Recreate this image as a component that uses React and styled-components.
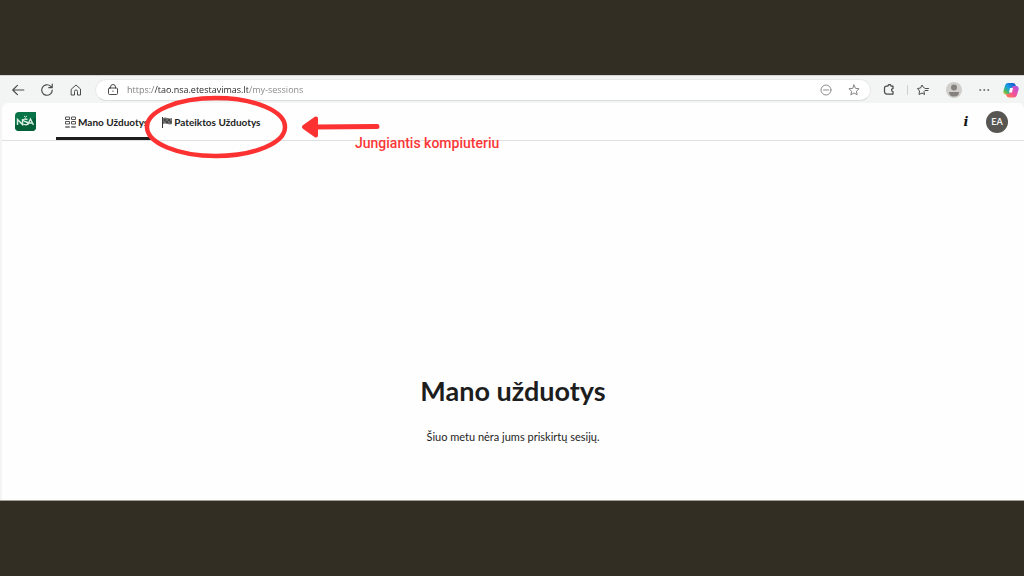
import React from "react";
import styled, { createGlobalStyle } from "styled-components";

const GlobalStyle = createGlobalStyle`
	* {
		box-sizing: border-box;
	}
	body {
		margin: 0;
		font-family: Lato, "Noto Sans", sans-serif;
		color: #1d1d1d;
		background: #322e24;
	}
`;

const Slide = styled.div`
	display: flex;
	flex-direction: column;
	min-height: 100vh;
	padding: 75px 0;
`;

const Browser = styled.div`
	flex: 1;
	display: flex;
	flex-direction: column;
	background: #f3f5f5;
	border-top: 1px solid #d5d6d4;
	border-bottom: 1px solid #a19e99;
`;

const Toolbar = styled.div`
	display: flex;
	align-items: center;
	height: 27px;
	padding-left: 8px;
`;

const IconButton = styled.button`
	display: flex;
	flex: none;
	align-items: center;
	justify-content: center;
	width: ${(p) => p.$width || 30}px;
	height: 22px;
	padding: 0;
	border: 0;
	background: none;
	color: ${(p) => p.$color || "#4b4b4b"};
	cursor: pointer;
`;

const NavButtons = styled.div`
	display: flex;
	width: 87px;
`;

const AddressBar = styled.div`
	display: flex;
	flex: 1;
	align-items: center;
	height: 22px;
	padding: 0 2px 0 8px;
	border: 1px solid #e9eaea;
	border-bottom-color: #dcdddd;
	border-radius: 11px;
	background: #fff;
`;

/* the host part of the address is darker than the rest */
const AddressInput = styled.input`
	flex: 1;
	min-width: 0;
	margin-left: 5px;
	padding: 0;
	border: 0;
	outline: 0;
	font: 9px "Open Sans", sans-serif;
	color: transparent;
	background: linear-gradient(90deg, #777 28px, #222 28px, #222 121px, #858585 121px);
	background-clip: text;
`;

const Separator = styled.div`
	width: 1px;
	height: 10px;
	background: #cfd0d0;
`;

const Site = styled.div`
	position: relative;
	flex: 1;
	display: flex;
	flex-direction: column;
	margin-left: 2px;
	border-radius: 6px 6px 0 0;
	background: #fefefe;
`;

const Header = styled.header`
	display: flex;
	align-items: stretch;
	height: 38px;
	padding: 0 16px 0 13px;
	border-bottom: 1px solid #e0e0e0;
`;

const Logo = styled.a`
	display: flex;
	align-items: center;
	width: 41px;
`;

const Tabs = styled.nav`
	display: flex;
	flex: 1;
`;

const Tab = styled.a`
	display: flex;
	align-items: center;
	gap: 2px;
	padding: 3px 4px 0 9px;
	border-bottom: 3px solid ${(p) => (p.$active ? "#1d1d1d" : "transparent")};
	color: #222;
	font-size: 10px;
	font-weight: 700;
	text-decoration: none;
	white-space: nowrap;
`;

const UserArea = styled.div`
	display: flex;
	align-items: center;
	gap: 9px;
`;

const InfoButton = styled(IconButton)`
	color: #111;
	font: italic 700 13px "DejaVu Serif", serif;
`;

const UserButton = styled.button`
	width: 22px;
	height: 22px;
	padding: 0;
	border: 0;
	border-radius: 50%;
	background: #575652;
	color: #f2f2f2;
	font: 700 9px Lato, sans-serif;
	cursor: pointer;
`;

const Main = styled.main`
	padding: 232px 16px 0;
	text-align: center;
`;

const Title = styled.h1`
	margin: 0;
	font-size: 27px;
	font-weight: 700;
	line-height: 36px;
`;

const Message = styled.p`
	margin: 19px 0 0;
	font-size: 11px;
	line-height: 18px;
`;

/* hand drawn marks that lie over the site */
const Marks = styled.svg`
	position: absolute;
	top: -9px;
	left: 139px;
	pointer-events: none;
`;

const MarkLabel = styled.div`
	position: absolute;
	top: 31px;
	left: 353px;
	color: #fb3737;
	font: 500 14px/18px Roboto, sans-serif;
	white-space: nowrap;
`;

function Icon({ size = 12, children, ...rest }) {
	return (
		<svg
			width={size}
			height={size}
			viewBox="0 0 24 24"
			fill="none"
			stroke="currentColor"
			strokeWidth="2"
			strokeLinecap="round"
			strokeLinejoin="round"
			aria-hidden="true"
			{...rest}
		>
			{children}
		</svg>
	);
}

const STAR = "M12 2l3 6.7 7.2.8-5.400 4.900 1.500 7.200-6.300-3.700-6.300 3.700 1.500-7.200L1.800 9.500 9 8.700z";

function NsaLogo() {
	return (
		<svg width="21" height="19" viewBox="0 0 21 19" aria-hidden="true">
			<path d="M4 0h17v15a4 4 0 0 1-4 4H4a4 4 0 0 1-4-4V4a4 4 0 0 1 4-4z" fill="#087447" />
			<path d="M0 13q11-1 21-8v10a4 4 0 0 1-4 4H4a4 4 0 0 1-4-4z" fill="#046039" />
			<g fill="none" stroke="#d8eee2" strokeWidth="1.400">
				<path d="M2.500 13V7.500l5 5V7" />
				<path d="M12.500 7.500q-4-1.200-4 .8c0 2 4.500 1 4.500 3 0 2-3.500 1.500-5 .7" />
				<path d="M12.500 13l3-6 3 6M13.500 11h4" />
				<path d="M9 4l1.500 1.200L12 4" strokeWidth="1" />
			</g>
		</svg>
	);
}

function GridIcon() {
	return (
		<svg width="11" height="12" viewBox="0 0 11 12" fill="none" stroke="#555" aria-hidden="true">
			<path d="M.5 1h4v2.500h-4zM6.500 1h4v2.500h-4zM.5 5.500h4V8h-4zM6.500 5.500h4V8h-4z" />
			<path d="M.5 10.500h4v1h-4zM6.500 10.500h4v1h-4z" stroke="#888" />
		</svg>
	);
}

function FlagIcon() {
	return (
		<svg width="11" height="12" viewBox="0 0 11 12" aria-hidden="true">
			<path d="M1.500 1v11" stroke="#333" />
			<path d="M2 2q2-.8 4.500 0T11 2v6q-2 .8-4.500 0T2 8z" fill="#707070" />
			<path d="M3 3h2v2H3zM7 3h2v2H7zM5 5h2v2H5zM9 5h1.500v2H9z" fill="#454545" />
		</svg>
	);
}

function CopilotIcon() {
	return (
		<svg width="16" height="16" viewBox="0 0 16 16" aria-hidden="true">
			<defs>
				<linearGradient id="cool" x1="1" y1="0" x2="0" y2="1">
					<stop offset="0" stopColor="#1748c8" />
					<stop offset=".5" stopColor="#189fe6" />
					<stop offset=".75" stopColor="#48b768" />
					<stop offset="1" stopColor="#f0c51e" />
				</linearGradient>
				<linearGradient id="warm" x1="1" y1="0" x2="0" y2="1">
					<stop offset="0" stopColor="#a557ee" />
					<stop offset=".5" stopColor="#f050a0" />
					<stop offset="1" stopColor="#ff813e" />
				</linearGradient>
			</defs>
			<path d="M5 1h5q2 0 2.600 2l.4 1.500h-2q-1.500 0-2 1.500l-1.500 4.500q-.7 2-2.500 2H2.500Q-.3 12 .4 9l1.800-6Q3 1 5 1z" fill="url(#cool)" />
			<path d="M11 15.500H6q-2 0-2.600-2L3 12h2q1.500 0 2-1.500L8.500 6q.7-2 2.500-2h2.500q2.800.5 2.100 3.500l-1.800 6q-.8 2-2.800 2z" fill="url(#warm)" />
			<path d="M7 6h3L9 10.500H6z" fill="#fff" />
		</svg>
	);
}

function BrowserToolbar() {
	return (
		<Toolbar>
			<NavButtons>
				<IconButton $width={20} aria-label="Back">
					<Icon size={14}>
						<path d="M22 12H3M11 4l-8 8 8 8" />
					</Icon>
				</IconButton>
				<IconButton $width={38} aria-label="Refresh">
					<Icon size={14}>
						<path d="M21 12a9 9 0 1 1-3-6.700L21 8M21 2v6h-6" />
					</Icon>
				</IconButton>
				<IconButton $width={20} aria-label="Home">
					<Icon>
						<path d="M3 10l9-8 9 8v12h-6v-7a3 3 0 0 0-6 0v7H3z" />
					</Icon>
				</IconButton>
			</NavButtons>
			<AddressBar>
				<IconButton $width={18} aria-label="Site information">
					<Icon>
						<rect x="3" y="8" width="18" height="13" rx="2" />
						<path d="M7 8V6a5 5 0 0 1 10 0v2M12 14v1" />
					</Icon>
				</IconButton>
				<AddressInput aria-label="Address" defaultValue="https://tao.nsa.etestavimas.lt/my-sessions" />
				<IconButton $width={28} $color="#8d8d8d" aria-label="Zoom out">
					<Icon>
						<circle cx="12" cy="12" r="10" />
						<path d="M7 12h10" />
					</Icon>
				</IconButton>
				<IconButton $width={28} $color="#858585" aria-label="Add to favourites">
					<Icon>
						<path d={STAR} />
					</Icon>
				</IconButton>
			</AddressBar>
			<IconButton $width={36} aria-label="Extensions">
				<Icon strokeWidth="2.500">
					<path d="M7 4h3a3 3 0 0 1 6 0h4v5a3 3 0 0 0 0 6v5H8a5 5 0 0 1-5-5V8a4 4 0 0 1 4-4z" />
				</Icon>
			</IconButton>
			<Separator />
			<IconButton aria-label="Favourites">
				<Icon>
					<path d="M15 8l-2-1-3-5-3 6-6 1 4 5-1 7 6-3 5 3-1-6M17 9h6M16 13h6" />
				</Icon>
			</IconButton>
			<IconButton $width={32} aria-label="Profile">
				<svg width="16" height="16" viewBox="0 0 16 16" aria-hidden="true">
					<circle cx="8" cy="8" r="8" fill="#d0ceca" />
					<circle cx="8" cy="5.500" r="3" fill="#85827e" />
					<path d="M3 10h10q0 4.500-5 4.500T3 10z" fill="#85827e" />
				</svg>
			</IconButton>
			<IconButton $width={28} aria-label="Settings and more">
				<Icon>
					<path d="M4 12h1M12 12h1M20 12h1" strokeWidth="3" />
				</Icon>
			</IconButton>
			<IconButton $width={26} aria-label="Copilot">
				<CopilotIcon />
			</IconButton>
		</Toolbar>
	);
}

function Annotations() {
	return (
		<>
			<Marks width="250" height="70" viewBox="0 0 250 70" fill="none" stroke="#fc3131" aria-hidden="true">
				<ellipse cx="75" cy="33" rx="69" ry="29" strokeWidth="4.500" />
				<path d="M174 33l62-.500" strokeWidth="5" strokeLinecap="round" />
				<path d="M163 33l12-8.500v17z" fill="#fc3131" strokeWidth="4" strokeLinejoin="round" />
			</Marks>
			<MarkLabel>Jungiantis kompiuteriu</MarkLabel>
		</>
	);
}

function App() {
	return (
		<Slide>
			<GlobalStyle />
			<Browser>
				<BrowserToolbar />
				<Site>
					<Header>
						<Logo href="#" aria-label="NŠA">
							<NsaLogo />
						</Logo>
						<Tabs>
							<Tab href="#my-sessions" $active>
								<GridIcon />
								Mano Užduotys
							</Tab>
							<Tab href="#submitted">
								<FlagIcon />
								Pateiktos Užduotys
							</Tab>
						</Tabs>
						<UserArea>
							<InfoButton $width={22} aria-label="Information">
								i
							</InfoButton>
							<UserButton>EA</UserButton>
						</UserArea>
					</Header>
					<Main>
						<Title>Mano užduotys</Title>
						<Message>Šiuo metu nėra jums priskirtų sesijų.</Message>
					</Main>
					<Annotations />
				</Site>
			</Browser>
		</Slide>
	);
}

export default App;
